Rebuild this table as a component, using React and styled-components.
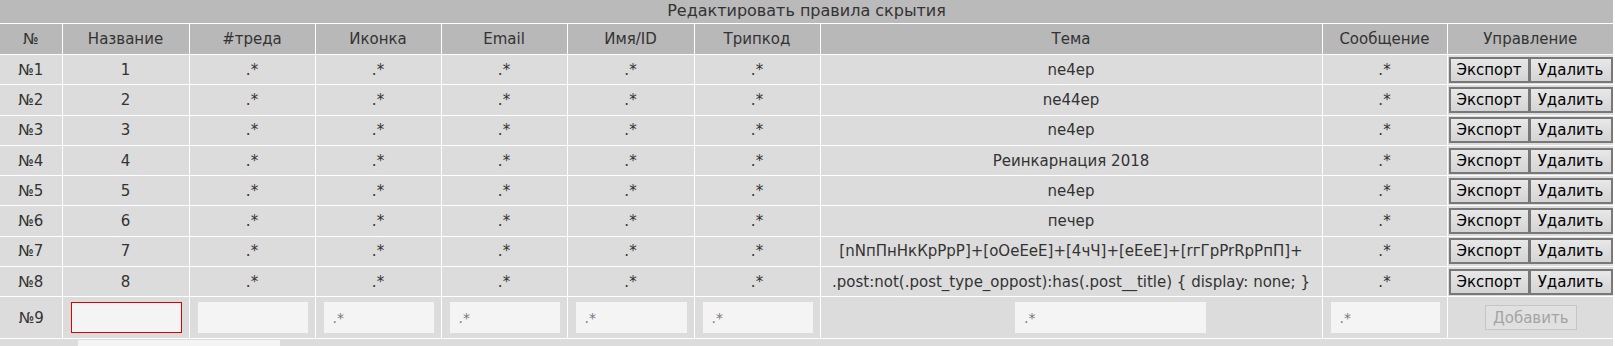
import React from 'react'
import styled, { createGlobalStyle } from 'styled-components'

const GlobalStyle = createGlobalStyle`
  body {
    margin: 0;
    background: #ffffff;
    font-family: "DejaVu Sans", Verdana, sans-serif;
  }
`

const Panel = styled.div`
  width: 1613px;
  background: #dcdcdc;
  color: #333;
  font-size: 15px;
`

const TitleBar = styled.div`
  height: 23px;
  line-height: 22px;
  font-size: 16px;
  background: #bababa;
  text-align: center;
  border-bottom: 1px solid #fff;
`

const Table = styled.table`
  width: 1613px;
  table-layout: fixed;
  border-collapse: collapse;
`

const Th = styled.th`
  height: 30px;
  padding: 0;
  background: #b8b8b8;
  font-weight: normal;
  text-align: center;
  border-left: 1px solid #fff;
  border-bottom: 1px solid #fff;
  &:first-child { border-left: none; }
`

const Td = styled.td`
  height: ${p => (p.$tall ? '41px' : '29.3px')};
  padding: ${p => (p.$tall ? '0 7px 0 8px' : '0')};
  background: #dcdcdc;
  text-align: center;
  border-left: 1px solid #fff;
  border-bottom: 1px solid #fff;
  white-space: nowrap;
  &:first-child { border-left: none; }
`

const Controls = styled.div`
  display: flex;
  justify-content: flex-start;
  padding-left: 1px;
`

const Button = styled.button`
  height: 26px;
  padding: 0 4px;
  font-family: "DejaVu Sans", Verdana, sans-serif;
  font-size: 15px;
  color: #000;
  background: linear-gradient(#e8e8e8, #d4d4d4);
  border: 2px solid #787878;
  border-radius: 0;
  width: ${p => p.$w}px;
  & + & { margin-left: 0; border-left-width: 1px; }
`

const AddButton = styled.button`
  width: 92px;
  height: 25px;
  padding: 0;
  font-family: "DejaVu Sans", Verdana, sans-serif;
  font-size: 15px;
  color: #a4a4a4;
  background: #e0e0e0;
  border: 1px solid #c6c6c6;
`

const Field = styled.input`
  box-sizing: border-box;
  width: ${p => (p.$w ? p.$w + 'px' : '100%')};
  height: 31px;
  margin-left: ${p => p.$shift || 0}px;
  padding: 0 8px;
  font-family: "DejaVu Sans", Verdana, sans-serif;
  font-size: 14px;
  color: #333;
  background: #f4f4f4;
  border: 1px solid ${p => (p.$invalid ? '#e00000' : '#f4f4f4')};
  outline: none;
  &::placeholder { color: #777; }
`

const Footer = styled.div`
  height: 7px;
  padding-left: 78px;
  background: #dcdcdc;
`

const FooterBox = styled.div`
  width: 202px;
  height: 6px;
  margin-top: 1px;
  background: #f4f4f4;
`

const widths = [62, 127, 126, 126, 126, 127, 126, 502, 125, 166]
const heads = ['№', 'Название', '#треда', 'Иконка', 'Email', 'Имя/ID', 'Трипкод', 'Тема', 'Сообщение', 'Управление']
const topics = [
  'ne4ep',
  'ne44ep',
  'ne4ep',
  'Реинкарнация 2018',
  'ne4ep',
  'печер',
  '[nNпПнНкКpPрР]+[oOeEеЕ]+[4чЧ]+[eEеЕ]+[rгГpPrRрРпП]+',
  '.post:not(.post_type_oppost):has(.post__title) { display: none; }',
]

export default function App() {
  return (
    <Panel>
      <GlobalStyle />
      <TitleBar>Редактировать правила скрытия</TitleBar>
      <Table>
        <colgroup>
          {widths.map((w, i) => <col key={i} style={{ width: w }} />)}
        </colgroup>
        <thead>
          <tr>{heads.map(h => <Th key={h}>{h}</Th>)}</tr>
        </thead>
        <tbody>
          {topics.map((t, i) => (
            <tr key={i}>
              <Td>№{i + 1}</Td>
              <Td>{i + 1}</Td>
              <Td>.*</Td>
              <Td>.*</Td>
              <Td>.*</Td>
              <Td>.*</Td>
              <Td>.*</Td>
              <Td>{t}</Td>
              <Td>.*</Td>
              <Td>
                <Controls>
                  <Button $w={81}>Экспорт</Button>
                  <Button $w={83}>Удалить</Button>
                </Controls>
              </Td>
            </tr>
          ))}
          <tr>
            <Td $tall>№9</Td>
            <Td $tall><Field $invalid /></Td>
            <Td $tall><Field /></Td>
            <Td $tall><Field placeholder=".*" /></Td>
            <Td $tall><Field placeholder=".*" /></Td>
            <Td $tall><Field placeholder=".*" /></Td>
            <Td $tall><Field placeholder=".*" /></Td>
            <Td $tall><Field $w={191} $shift={78} placeholder=".*" /></Td>
            <Td $tall><Field placeholder=".*" /></Td>
            <Td $tall><AddButton disabled>Добавить</AddButton></Td>
          </tr>
        </tbody>
      </Table>
      <Footer><FooterBox /></Footer>
    </Panel>
  )
}
